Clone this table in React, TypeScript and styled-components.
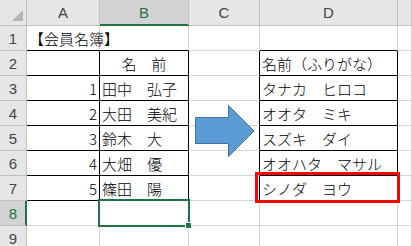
import React from "react";
import styled, { createGlobalStyle, css } from "styled-components";

const GREEN = "#217346";
const GRID = "#d4d4d4";
const HEAD_BG = "#e6e6e6";
const HEAD_SEL = "#d2d2d2";
const HEAD_LINE = "#bfbfbf";

const Global = createGlobalStyle`
  html, body { margin: 0; padding: 0; background: #fff; }
  body { width: 412px; height: 246px; overflow: hidden; }
`;

const Sheet = styled.div`
  position: relative;
  display: grid;
  grid-template-columns: 27px 73px 89px 71px 138px 1fr;
  grid-template-rows: 26px repeat(9, 25px);
  width: 412px;
  height: 246px;
  overflow: hidden;
  font-family: "Noto Sans CJK JP", "Noto Sans", sans-serif;
  font-size: 15px;
  font-weight: 300;
  color: #000;
`;

const Corner = styled.div`
  background: ${HEAD_BG};
  border-right: 1px solid ${HEAD_LINE};
  border-bottom: 1px solid ${HEAD_LINE};
  display: flex;
  align-items: flex-end;
  justify-content: flex-end;
  padding: 0 2px 3px 0;
`;

const ColHead = styled.div<{ $sel?: boolean }>`
  background: ${(p) => (p.$sel ? HEAD_SEL : HEAD_BG)};
  border-right: 1px solid ${HEAD_LINE};
  border-bottom: ${(p) => (p.$sel ? `2px solid ${GREEN}` : `1px solid ${HEAD_LINE}`)};
  color: ${(p) => (p.$sel ? GREEN : "#444")};
  font-family: "Liberation Sans", Arial, sans-serif;
  font-weight: 400;
  font-size: 15px;
  display: flex;
  align-items: center;
  justify-content: center;
  padding-top: ${(p) => (p.$sel ? "1px" : "0")};
`;

const RowHead = styled.div<{ $sel?: boolean }>`
  background: ${(p) => (p.$sel ? HEAD_SEL : HEAD_BG)};
  border-right: ${(p) => (p.$sel ? `2px solid ${GREEN}` : `1px solid ${HEAD_LINE}`)};
  border-bottom: 1px solid ${HEAD_LINE};
  color: ${(p) => (p.$sel ? GREEN : "#444")};
  font-family: "Liberation Sans", Arial, sans-serif;
  font-weight: 400;
  font-size: 15px;
  display: flex;
  align-items: center;
  justify-content: center;
  padding-left: ${(p) => (p.$sel ? "1px" : "0")};
`;

type CellProps = {
  $right?: boolean;
  $bottom?: boolean;
  $align?: "left" | "right" | "center";
};

const Cell = styled.div<CellProps>`
  position: relative;
  border-right: 1px solid ${(p) => (p.$right ? "#000" : GRID)};
  border-bottom: 1px solid ${(p) => (p.$bottom ? "#000" : GRID)};
  display: flex;
  align-items: center;
  padding: 1px 2px 0 2px;
  white-space: nowrap;
  line-height: 20px;
  ${(p) =>
    p.$align === "right"
      ? css`justify-content: flex-end;`
      : p.$align === "center"
      ? css`justify-content: center;`
      : css`justify-content: flex-start;`}
`;

const Overflow = styled.span`
  position: relative;
  z-index: 1;
`;

const Selection = styled.div`
  position: absolute;
  left: -2px;
  top: -2px;
  right: -2px;
  bottom: -2px;
  border: 2px solid ${GREEN};
  pointer-events: none;
  z-index: 2;
`;

const FillHandle = styled.div`
  position: absolute;
  right: -4px;
  bottom: -4px;
  width: 5px;
  height: 5px;
  background: ${GREEN};
  border: 1px solid #fff;
`;

const Highlight = styled.div`
  position: absolute;
  left: 255px;
  top: 172px;
  width: 145px;
  height: 31px;
  box-sizing: border-box;
  border: 3px solid #ff0000;
  z-index: 3;
`;

const ArrowShape = styled.svg`
  position: absolute;
  left: 194px;
  top: 104px;
  z-index: 3;
`;

const Triangle = () => (
  <svg width="12" height="12" viewBox="0 0 12 12">
    <polygon points="11,0 11,11 0,11" fill="#b4b4b4" />
  </svg>
);

const members = [
  { no: "1", name: "田中　弘子", kana: "タナカ　ヒロコ" },
  { no: "2", name: "大田　美紀", kana: "オオタ　ミキ" },
  { no: "3", name: "鈴木　大", kana: "スズキ　ダイ" },
  { no: "4", name: "大畑　優", kana: "オオハタ　マサル" },
  { no: "5", name: "篠田　陽", kana: "シノダ　ヨウ" },
];

const cols = ["A", "B", "C", "D", "E"];

export default function App() {
  return (
    <>
      <Global />
      <Sheet>
        <Corner>
          <Triangle />
        </Corner>
        {cols.map((c) => (
          <ColHead key={c} $sel={c === "B"}>
            {c === "E" ? "" : c}
          </ColHead>
        ))}

        {/* row 1: title */}
        <RowHead>1</RowHead>
        <Cell $bottom>
          <Overflow>【会員名簿】</Overflow>
        </Cell>
        <Cell $bottom />
        <Cell />
        <Cell $bottom />
        <Cell />

        {/* row 2: headings */}
        <RowHead>2</RowHead>
        <Cell $right $bottom />
        <Cell $right $bottom $align="center">
          名　前
        </Cell>
        <Cell $right />
        <Cell $right $bottom>
          名前（ふりがな）
        </Cell>
        <Cell />

        {members.map((m, i) => (
          <React.Fragment key={m.no}>
            <RowHead>{i + 3}</RowHead>
            <Cell $right $bottom $align="right">
              {m.no}
            </Cell>
            <Cell $right $bottom>
              {m.name}
            </Cell>
            <Cell $right />
            <Cell $right $bottom>
              {m.kana}
            </Cell>
            <Cell />
          </React.Fragment>
        ))}

        {/* row 8: active cell B8 */}
        <RowHead $sel>8</RowHead>
        <Cell />
        <Cell>
          <Selection>
            <FillHandle />
          </Selection>
        </Cell>
        <Cell />
        <Cell />
        <Cell />

        <RowHead>9</RowHead>
        <Cell />
        <Cell />
        <Cell />
        <Cell />
        <Cell />

        <ArrowShape width="62" height="54" viewBox="0 0 62 54">
          <polygon
            points="1.5,13.5 34.5,13.5 34.5,1.5 60,27 34.5,52.5 34.5,39.5 1.5,39.5"
            fill="#5b9bd5"
            stroke="#41719c"
            strokeWidth="1"
          />
        </ArrowShape>
        <Highlight />
      </Sheet>
    </>
  );
}
